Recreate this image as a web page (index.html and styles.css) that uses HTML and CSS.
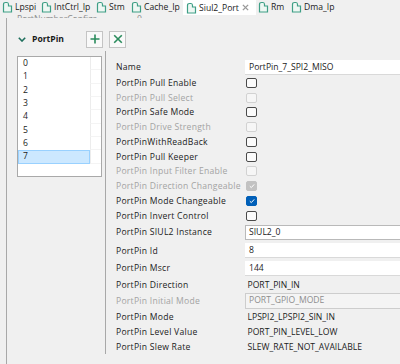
FILE: index.html
```html
<!DOCTYPE html>
<html lang="en">
<head>
    <meta charset="UTF-8">
    <title>Siul2_Port</title>
    <link rel="stylesheet" href="styles.css">
</head>
<body>

<div class="tabs">
    <div class="tab"><svg class="ico" viewBox="0 0 11 12"><path d="M1.5 3.5 Q1.5 1.5 3.5 1.5 H5 Q6.5 1.5 6.5 3.5 V5 H9.5 V11 H1.5 Z"/></svg>Lpspi</div>
    <div class="tab"><svg class="ico" viewBox="0 0 11 12"><path d="M1.5 3.5 Q1.5 1.5 3.5 1.5 H5 Q6.5 1.5 6.5 3.5 V5 H9.5 V11 H1.5 Z"/></svg>IntCtrl_Ip</div>
    <div class="tab"><svg class="ico" viewBox="0 0 11 12"><path d="M1.5 3.5 Q1.5 1.5 3.5 1.5 H5 Q6.5 1.5 6.5 3.5 V5 H9.5 V11 H1.5 Z"/></svg>Stm</div>
    <div class="tab"><svg class="ico" viewBox="0 0 11 12"><path d="M1.5 3.5 Q1.5 1.5 3.5 1.5 H5 Q6.5 1.5 6.5 3.5 V5 H9.5 V11 H1.5 Z"/></svg>Cache_Ip</div>
    <div class="tab active"><svg class="ico" viewBox="0 0 11 12"><path d="M1.5 3.5 Q1.5 1.5 3.5 1.5 H5 Q6.5 1.5 6.5 3.5 V5 H9.5 V11 H1.5 Z"/></svg>Siul2_Port<svg class="close" viewBox="0 0 8 8"><path d="M1 1 L7 7 M7 1 L1 7"/></svg></div>
    <div class="tab"><svg class="ico" viewBox="0 0 11 12"><path d="M1.5 3.5 Q1.5 1.5 3.5 1.5 H5 Q6.5 1.5 6.5 3.5 V5 H9.5 V11 H1.5 Z"/></svg>Rm</div>
    <div class="tab"><svg class="ico" viewBox="0 0 11 12"><path d="M1.5 3.5 Q1.5 1.5 3.5 1.5 H5 Q6.5 1.5 6.5 3.5 V5 H9.5 V11 H1.5 Z"/></svg>Dma_Ip</div>
</div>

<div class="clipped"><span>PortNumberConfigs</span><span class="clipped-b">0</span></div>

<div class="editor">
    <div class="toolbar">
        <svg class="chevron" viewBox="0 0 8 5"><path d="M0.8 0.8 L4 4 L7.2 0.8"/></svg>
        <span class="title">PortPin</span>
        <button class="tool add"><svg viewBox="0 0 10 10"><path d="M5 0.5 V9.5 M0.5 5 H9.5"/></svg></button>
        <button class="tool del"><svg viewBox="0 0 10 10"><path d="M1.2 1.2 L8.8 8.8 M8.8 1.2 L1.2 8.8"/></svg></button>
    </div>

    <div class="body">
        <div class="list-pane">
            <div class="list">
                <div class="item"><span>0</span><span></span></div>
                <div class="item"><span>1</span><span></span></div>
                <div class="item"><span>2</span><span></span></div>
                <div class="item"><span>3</span><span></span></div>
                <div class="item"><span>4</span><span></span></div>
                <div class="item"><span>5</span><span></span></div>
                <div class="item"><span>6</span><span></span></div>
                <div class="item selected"><span>7</span><span></span></div>
            </div>
        </div>

        <div class="props">
            <div class="row h-name"><label>Name</label><div class="input">PortPin_7_SPI2_MISO</div></div>
            <div class="row h-check"><label>PortPin Pull Enable</label><span class="cb"></span></div>
            <div class="row h-check off"><label>PortPin Pull Select</label><span class="cb"></span></div>
            <div class="row h-check"><label>PortPin Safe Mode</label><span class="cb"></span></div>
            <div class="row h-check off"><label>PortPin Drive Strength</label><span class="cb"></span></div>
            <div class="row h-check"><label>PortPinWithReadBack</label><span class="cb"></span></div>
            <div class="row h-check"><label>PortPin Pull Keeper</label><span class="cb"></span></div>
            <div class="row h-check off"><label>PortPin Input Filter Enable</label><span class="cb"></span></div>
            <div class="row h-check off"><label>PortPin Direction Changeable</label><span class="cb checked"><svg viewBox="0 0 8 8"><path d="M1.8 4.2 L3.3 5.6 L6.2 2.4"/></svg></span></div>
            <div class="row h-check"><label>PortPin Mode Changeable</label><span class="cb checked"><svg viewBox="0 0 8 8"><path d="M1.8 4.2 L3.3 5.6 L6.2 2.4"/></svg></span></div>
            <div class="row h-check"><label>PortPin Invert Control</label><span class="cb"></span></div>
            <div class="row h-siul"><label>PortPin SIUL2 Instance</label><div class="input combo">SIUL2_0</div></div>
            <div class="row h-id"><label>PortPin Id</label><div class="input">8</div></div>
            <div class="row h-mscr"><label>PortPin Mscr</label><div class="input">144</div></div>
            <div class="row h-dir"><label>PortPin Direction</label><div class="value">PORT_PIN_IN</div></div>
            <div class="row h-init off"><label>PortPin Initial Mode</label><div class="input disabled">PORT_GPIO_MODE</div></div>
            <div class="row h-dir"><label>PortPin Mode</label><div class="value">LPSPI2_LPSPI2_SIN_IN</div></div>
            <div class="row h-last"><label>PortPin Level Value</label><div class="value">PORT_PIN_LEVEL_LOW</div></div>
            <div class="row h-last"><label>PortPin Slew Rate</label><div class="value">SLEW_RATE_NOT_AVAILABLE</div></div>
        </div>
    </div>
</div>

</body>
</html>
```

FILE: styles.css
```css
body {
    margin: 0;
    height: 364px;
    overflow: hidden;
    background: #f0f0f0;
    font-family: "Open Sans", "Noto Sans", sans-serif;
    font-size: 8.6px;
    color: #1b1b1b;
}

/* tab strip */
.tabs {
    display: flex;
    height: 13px;
}
.tab {
    display: flex;
    align-items: center;
    gap: 2px;
    padding-left: 2px;
    height: 14px;
    box-sizing: border-box;
    white-space: nowrap;
    flex: none;
}
.tab:nth-child(1) { width: 39px; }
.tab:nth-child(2) { width: 55px; }
.tab:nth-child(3) { width: 35px; }
.tab:nth-child(4) { width: 54px; }
.tab:nth-child(5) { width: 73px; }
.tab:nth-child(6) { width: 33px; }
.tab.active {
    background: #fff;
    height: 15px;
    padding-left: 3px;
}
.ico {
    width: 11px;
    height: 12px;
    flex: none;
}
.ico path {
    fill: #eef7f3;
    stroke: #3f9f86;
    stroke-width: 1.2;
}
.close {
    width: 7px;
    height: 7px;
    margin-left: auto;
    margin-right: 7px;
}
.close path {
    stroke: #9a9a9a;
    stroke-width: 1.6;
}

.clipped {
    height: 5px;
    overflow: hidden;
    padding-left: 17px;
    color: #8c8c8c;
}
.clipped span {
    display: inline-block;
    margin-top: -5px;
}
.clipped-b {
    margin-left: 40px;
}

/* editor */
.editor {
    margin-left: 6px;
    border-left: 1px solid #a8a8a8;
    height: 346px;
}
.toolbar {
    display: flex;
    align-items: center;
    height: 16px;
    padding-top: 13px;
    padding-left: 11px;
}
.chevron {
    width: 8px;
    height: 5px;
}
.chevron path {
    fill: none;
    stroke: #1f6f5d;
    stroke-width: 1.6;
}
.title {
    font-weight: 700;
    margin-left: 6px;
    width: 26px;
}
.tool {
    width: 17px;
    height: 17px;
    padding: 0;
    border: 1px solid #c4c4c4;
    background: #f9f9f9;
    display: flex;
    align-items: center;
    justify-content: center;
}
.tool svg {
    width: 10px;
    height: 10px;
}
.tool path {
    stroke: #2a8b5c;
    stroke-width: 1.6;
}
.add {
    margin-left: 28px;
}
.del {
    margin-left: 6px;
}

.body {
    display: flex;
    margin-top: 4px;
}
.list-pane {
    width: 99px;
    height: 303px;
    border-right: 1px solid #a8a8a8;
    padding-top: 5px;
    padding-left: 10px;
    box-sizing: border-box;
}
.list {
    width: 85px;
    height: 121px;
    border: 1px solid #a9a9a9;
    background: #fff;
    box-sizing: border-box;
}
.item {
    display: grid;
    grid-template-columns: 72px 1fr;
    height: 13.33px;
    line-height: 13.33px;
}
.item span:first-child {
    padding-left: 5px;
}
.item span:last-child {
    border-left: 1px solid #ececec;
    border-bottom: 1px solid #f4f4f4;
}
.item.selected span:first-child {
    background: #cce8ff;
    box-shadow: inset 0 0 0 1px #99d1ff;
}

/* properties */
.props {
    flex: 1;
    padding-top: 7.5px;
    padding-left: 10px;
}
.row {
    display: grid;
    grid-template-columns: 129px 1fr;
    align-items: center;
    white-space: nowrap;
}
.row label {
    letter-spacing: 0.25px;
}
.row.off label {
    color: #a3a3a3;
}
.h-name { height: 17px; }
.h-check { height: 14.75px; }
.h-siul { height: 18.5px; }
.h-id { height: 18px; }
.h-mscr { height: 17.5px; }
.h-dir { height: 15.5px; }
.h-init { height: 17px; }
.h-last { height: 14.5px; }

.input {
    height: 14px;
    line-height: 14px;
    background: #fff;
    padding-left: 4px;
    margin-right: -10px;
    border-bottom: 1px solid #d9d9d9;
}
.input.combo {
    height: 13px;
    line-height: 13px;
    border: 1px solid #b9b9b9;
    padding-left: 3px;
}
.input.disabled {
    height: 13.5px;
    line-height: 13.5px;
    background: #f4f4f4;
    border: 1px solid #cdcdcd;
    padding-left: 3px;
    color: #8d8d8d;
}
.value {
    padding-left: 2.5px;
}

.cb {
    width: 9px;
    height: 8px;
    margin-left: 1px;
    border: 1px solid #4a4a4a;
    border-radius: 2px;
    background: #fbfbfb;
    display: flex;
    align-items: center;
    justify-content: center;
}
.off .cb {
    border-color: #d2d2d2;
    background: #f6f6f6;
}
.cb.checked {
    background: #005fb8;
    border-color: #005fb8;
}
.off .cb.checked {
    background: #c2c2c2;
    border-color: #c2c2c2;
}
.cb svg {
    width: 8px;
    height: 8px;
}
.cb path {
    fill: none;
    stroke: #fff;
    stroke-width: 1;
}
```
